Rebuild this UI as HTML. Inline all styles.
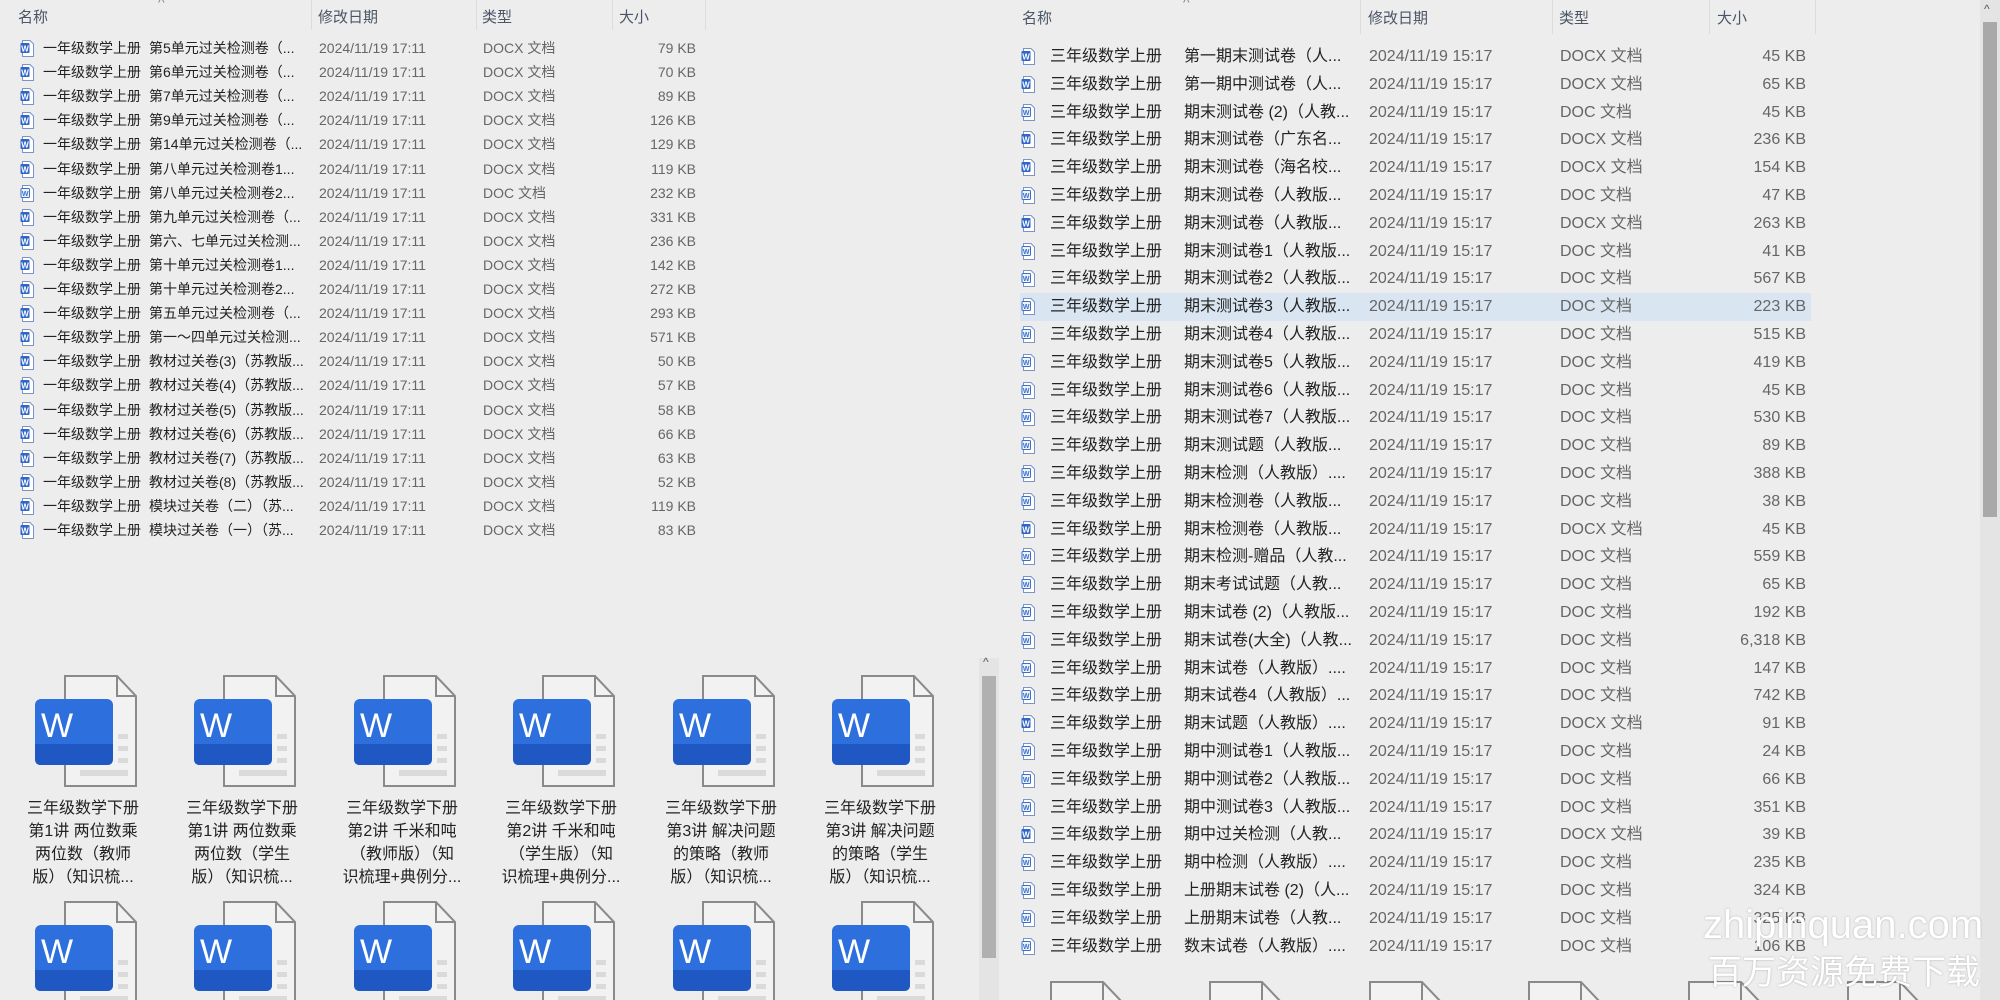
<!DOCTYPE html>
<html><head><meta charset="utf-8">
<style>
*{margin:0;padding:0;box-sizing:border-box}
html{width:2000px;height:1000px;overflow:hidden}
body{width:2000px;height:1000px;overflow:hidden;background:#ededed;position:relative;font-family:"Liberation Sans","Noto Sans CJK SC",sans-serif;color:#222}
.a{position:absolute;white-space:nowrap}
.h{position:absolute;color:#4a5565;font-size:15px}
.sep{position:absolute;width:1px;background:#dcdcdc}
.L{position:absolute;left:0;width:720px;height:24px;line-height:24px;font-size:14px}
.R{position:absolute;left:1020px;width:791px;height:28px;line-height:28px;font-size:16px}
.L span,.R span{position:absolute;white-space:nowrap}
.L svg{position:absolute;left:20px;top:4px}
.R svg{position:absolute;left:1px;top:5px}
.L .n1{left:43px}.L .n2{left:149px}.L .d{left:319px;color:#666}.L .t{left:483px;color:#666}.L .s{right:24px;color:#666;text-align:right}
.R .n1{left:30px}.R .n2{left:164px}.R .d{left:349px;color:#666}.R .t{left:540px;color:#666}.R .s{right:5px;color:#666}
.big{position:absolute;width:150px;text-align:center}
.big svg{display:block;margin:0 auto 0 0}
.cl{position:absolute;display:block}
.lab{font-size:16px;line-height:23px;color:#222;margin-top:8px;width:150px;margin-left:-24px;text-align:center;white-space:nowrap}
.wm{position:absolute;color:#fff;white-space:nowrap;line-height:1;text-shadow:0 0 2px rgba(0,0,0,.25)}
</style></head><body>
<svg width="0" height="0" style="position:absolute">
<defs>
<g id="dx"><path d="M2.5 .5H10L13.5 4V16.5H2.5Z" fill="#fff" stroke="#7a94c8"/><rect x=".5" y="3" width="9" height="10" rx="1" fill="#2f66c7"/><text x="5" y="11.3" font-size="8" fill="#fff" text-anchor="middle" font-family="Liberation Sans" font-weight="bold">W</text></g>
<g id="dc"><path d="M2.5 .5H10L13.5 4V16.5H2.5Z" fill="#fff" stroke="#7a94c8"/><rect x="1" y="3.5" width="8.5" height="9" rx="1" fill="#eef3fb" stroke="#3a6fcc"/><text x="5.2" y="11" font-size="7" fill="#3a6fcc" text-anchor="middle" font-family="Liberation Sans" font-weight="bold">W</text></g>
<g id="bg"><path d="M33 2H85L104 22V112H33Z" fill="#f2f2f2" stroke="#8a8a8a" stroke-width="2"/><path d="M85 2V22H104" fill="none" stroke="#8a8a8a" stroke-width="2"/><rect x="86" y="60" width="10" height="5" fill="#dadada"/><rect x="86" y="72" width="10" height="5" fill="#dadada"/><rect x="86" y="84" width="10" height="5" fill="#dadada"/><rect x="48" y="96" width="48" height="6" fill="#dadada"/><rect x="3" y="25" width="78" height="66" rx="6" fill="#2d6fdc"/><path d="M3 70H81V85Q81 91 75 91H9Q3 91 3 85Z" fill="#1f58c2"/><text x="25" y="63" font-size="34" fill="#fff" text-anchor="middle" font-family="Liberation Sans">W</text></g>
</defs></svg>

<!-- left header -->
<div class="h" style="left:18px;top:6px">名称</div>
<div class="a" style="left:158px;top:-6px;color:#888;font-size:14px">^</div>
<div class="sep" style="left:311px;top:0;height:30px"></div>
<div class="h" style="left:318px;top:6px">修改日期</div>
<div class="sep" style="left:476px;top:0;height:30px"></div>
<div class="h" style="left:482px;top:6px">类型</div>
<div class="sep" style="left:612px;top:0;height:30px"></div>
<div class="h" style="left:619px;top:6px">大小</div>
<div class="sep" style="left:705px;top:0;height:30px"></div>

<div class="L" style="top:36px"><svg width="15" height="17"><use href="#dx"/></svg><span class="n1">一年级数学上册</span><span class="n2">第5单元过关检测卷（...</span><span class="d">2024/11/19 17:11</span><span class="t">DOCX 文档</span><span class="s">79 KB</span></div>
<div class="L" style="top:60.1px"><svg width="15" height="17"><use href="#dx"/></svg><span class="n1">一年级数学上册</span><span class="n2">第6单元过关检测卷（...</span><span class="d">2024/11/19 17:11</span><span class="t">DOCX 文档</span><span class="s">70 KB</span></div>
<div class="L" style="top:84.2px"><svg width="15" height="17"><use href="#dx"/></svg><span class="n1">一年级数学上册</span><span class="n2">第7单元过关检测卷（...</span><span class="d">2024/11/19 17:11</span><span class="t">DOCX 文档</span><span class="s">89 KB</span></div>
<div class="L" style="top:108.3px"><svg width="15" height="17"><use href="#dx"/></svg><span class="n1">一年级数学上册</span><span class="n2">第9单元过关检测卷（...</span><span class="d">2024/11/19 17:11</span><span class="t">DOCX 文档</span><span class="s">126 KB</span></div>
<div class="L" style="top:132.4px"><svg width="15" height="17"><use href="#dx"/></svg><span class="n1">一年级数学上册</span><span class="n2">第14单元过关检测卷（...</span><span class="d">2024/11/19 17:11</span><span class="t">DOCX 文档</span><span class="s">129 KB</span></div>
<div class="L" style="top:156.5px"><svg width="15" height="17"><use href="#dx"/></svg><span class="n1">一年级数学上册</span><span class="n2">第八单元过关检测卷1...</span><span class="d">2024/11/19 17:11</span><span class="t">DOCX 文档</span><span class="s">119 KB</span></div>
<div class="L" style="top:180.6px"><svg width="15" height="17"><use href="#dc"/></svg><span class="n1">一年级数学上册</span><span class="n2">第八单元过关检测卷2...</span><span class="d">2024/11/19 17:11</span><span class="t">DOC 文档</span><span class="s">232 KB</span></div>
<div class="L" style="top:204.7px"><svg width="15" height="17"><use href="#dx"/></svg><span class="n1">一年级数学上册</span><span class="n2">第九单元过关检测卷（...</span><span class="d">2024/11/19 17:11</span><span class="t">DOCX 文档</span><span class="s">331 KB</span></div>
<div class="L" style="top:228.8px"><svg width="15" height="17"><use href="#dx"/></svg><span class="n1">一年级数学上册</span><span class="n2">第六、七单元过关检测...</span><span class="d">2024/11/19 17:11</span><span class="t">DOCX 文档</span><span class="s">236 KB</span></div>
<div class="L" style="top:252.9px"><svg width="15" height="17"><use href="#dx"/></svg><span class="n1">一年级数学上册</span><span class="n2">第十单元过关检测卷1...</span><span class="d">2024/11/19 17:11</span><span class="t">DOCX 文档</span><span class="s">142 KB</span></div>
<div class="L" style="top:277px"><svg width="15" height="17"><use href="#dx"/></svg><span class="n1">一年级数学上册</span><span class="n2">第十单元过关检测卷2...</span><span class="d">2024/11/19 17:11</span><span class="t">DOCX 文档</span><span class="s">272 KB</span></div>
<div class="L" style="top:301.1px"><svg width="15" height="17"><use href="#dx"/></svg><span class="n1">一年级数学上册</span><span class="n2">第五单元过关检测卷（...</span><span class="d">2024/11/19 17:11</span><span class="t">DOCX 文档</span><span class="s">293 KB</span></div>
<div class="L" style="top:325.2px"><svg width="15" height="17"><use href="#dx"/></svg><span class="n1">一年级数学上册</span><span class="n2">第一～四单元过关检测...</span><span class="d">2024/11/19 17:11</span><span class="t">DOCX 文档</span><span class="s">571 KB</span></div>
<div class="L" style="top:349.3px"><svg width="15" height="17"><use href="#dx"/></svg><span class="n1">一年级数学上册</span><span class="n2">教材过关卷(3)（苏教版...</span><span class="d">2024/11/19 17:11</span><span class="t">DOCX 文档</span><span class="s">50 KB</span></div>
<div class="L" style="top:373.4px"><svg width="15" height="17"><use href="#dx"/></svg><span class="n1">一年级数学上册</span><span class="n2">教材过关卷(4)（苏教版...</span><span class="d">2024/11/19 17:11</span><span class="t">DOCX 文档</span><span class="s">57 KB</span></div>
<div class="L" style="top:397.5px"><svg width="15" height="17"><use href="#dx"/></svg><span class="n1">一年级数学上册</span><span class="n2">教材过关卷(5)（苏教版...</span><span class="d">2024/11/19 17:11</span><span class="t">DOCX 文档</span><span class="s">58 KB</span></div>
<div class="L" style="top:421.6px"><svg width="15" height="17"><use href="#dx"/></svg><span class="n1">一年级数学上册</span><span class="n2">教材过关卷(6)（苏教版...</span><span class="d">2024/11/19 17:11</span><span class="t">DOCX 文档</span><span class="s">66 KB</span></div>
<div class="L" style="top:445.7px"><svg width="15" height="17"><use href="#dx"/></svg><span class="n1">一年级数学上册</span><span class="n2">教材过关卷(7)（苏教版...</span><span class="d">2024/11/19 17:11</span><span class="t">DOCX 文档</span><span class="s">63 KB</span></div>
<div class="L" style="top:469.8px"><svg width="15" height="17"><use href="#dx"/></svg><span class="n1">一年级数学上册</span><span class="n2">教材过关卷(8)（苏教版...</span><span class="d">2024/11/19 17:11</span><span class="t">DOCX 文档</span><span class="s">52 KB</span></div>
<div class="L" style="top:493.9px"><svg width="15" height="17"><use href="#dx"/></svg><span class="n1">一年级数学上册</span><span class="n2">模块过关卷（二）（苏...</span><span class="d">2024/11/19 17:11</span><span class="t">DOCX 文档</span><span class="s">119 KB</span></div>
<div class="L" style="top:518px"><svg width="15" height="17"><use href="#dx"/></svg><span class="n1">一年级数学上册</span><span class="n2">模块过关卷（一）（苏...</span><span class="d">2024/11/19 17:11</span><span class="t">DOCX 文档</span><span class="s">83 KB</span></div>

<!-- left big icons -->
<div class="big" style="left:32px;top:674px"><svg width="110" height="115"><use href="#bg"/></svg><div class="lab">三年级数学下册<br>第1讲 两位数乘<br>两位数（教师<br>版）（知识梳...</div></div>
<div class="big" style="left:191px;top:674px"><svg width="110" height="115"><use href="#bg"/></svg><div class="lab">三年级数学下册<br>第1讲 两位数乘<br>两位数（学生<br>版）（知识梳...</div></div>
<div class="big" style="left:351px;top:674px"><svg width="110" height="115"><use href="#bg"/></svg><div class="lab">三年级数学下册<br>第2讲 千米和吨<br>（教师版）（知<br>识梳理+典例分...</div></div>
<div class="big" style="left:510px;top:674px"><svg width="110" height="115"><use href="#bg"/></svg><div class="lab">三年级数学下册<br>第2讲 千米和吨<br>（学生版）（知<br>识梳理+典例分...</div></div>
<div class="big" style="left:670px;top:674px"><svg width="110" height="115"><use href="#bg"/></svg><div class="lab">三年级数学下册<br>第3讲 解决问题<br>的策略（教师<br>版）（知识梳...</div></div>
<div class="big" style="left:829px;top:674px"><svg width="110" height="115"><use href="#bg"/></svg><div class="lab">三年级数学下册<br>第3讲 解决问题<br>的策略（学生<br>版）（知识梳...</div></div>

<svg class="cl" style="left:32px;top:900px" width="110" height="100"><use href="#bg"/></svg>
<svg class="cl" style="left:191px;top:900px" width="110" height="100"><use href="#bg"/></svg>
<svg class="cl" style="left:351px;top:900px" width="110" height="100"><use href="#bg"/></svg>
<svg class="cl" style="left:510px;top:900px" width="110" height="100"><use href="#bg"/></svg>
<svg class="cl" style="left:670px;top:900px" width="110" height="100"><use href="#bg"/></svg>
<svg class="cl" style="left:829px;top:900px" width="110" height="100"><use href="#bg"/></svg>

<!-- left scrollbar -->
<div class="a" style="left:979px;top:658px;width:20px;height:342px;background:#e4e4e4"></div>
<div class="a" style="left:982px;top:676px;width:14px;height:282px;background:#b0b0b0"></div>
<div class="a" style="left:983px;top:655px;font-size:12px;color:#555">^</div>

<!-- right header -->
<div class="h" style="left:1022px;top:7px">名称</div>
<div class="a" style="left:1183px;top:-6px;color:#888;font-size:14px">^</div>
<div class="sep" style="left:1360px;top:0;height:34px"></div>
<div class="h" style="left:1368px;top:7px">修改日期</div>
<div class="sep" style="left:1552px;top:0;height:34px"></div>
<div class="h" style="left:1559px;top:7px">类型</div>
<div class="sep" style="left:1709px;top:0;height:34px"></div>
<div class="h" style="left:1717px;top:7px">大小</div>
<div class="sep" style="left:1815px;top:0;height:34px"></div>

<div class="R" style="top:43px"><svg width="15" height="17"><use href="#dx"/></svg><span class="n1">三年级数学上册</span><span class="n2">第一期末测试卷（人...</span><span class="d">2024/11/19 15:17</span><span class="t">DOCX 文档</span><span class="s">45 KB</span></div>
<div class="R" style="top:70.8px"><svg width="15" height="17"><use href="#dx"/></svg><span class="n1">三年级数学上册</span><span class="n2">第一期中测试卷（人...</span><span class="d">2024/11/19 15:17</span><span class="t">DOCX 文档</span><span class="s">65 KB</span></div>
<div class="R" style="top:98.6px"><svg width="15" height="17"><use href="#dc"/></svg><span class="n1">三年级数学上册</span><span class="n2">期末测试卷 (2)（人教...</span><span class="d">2024/11/19 15:17</span><span class="t">DOC 文档</span><span class="s">45 KB</span></div>
<div class="R" style="top:126.4px"><svg width="15" height="17"><use href="#dx"/></svg><span class="n1">三年级数学上册</span><span class="n2">期末测试卷（广东名...</span><span class="d">2024/11/19 15:17</span><span class="t">DOCX 文档</span><span class="s">236 KB</span></div>
<div class="R" style="top:154.2px"><svg width="15" height="17"><use href="#dx"/></svg><span class="n1">三年级数学上册</span><span class="n2">期末测试卷（海名校...</span><span class="d">2024/11/19 15:17</span><span class="t">DOCX 文档</span><span class="s">154 KB</span></div>
<div class="R" style="top:182px"><svg width="15" height="17"><use href="#dc"/></svg><span class="n1">三年级数学上册</span><span class="n2">期末测试卷（人教版...</span><span class="d">2024/11/19 15:17</span><span class="t">DOC 文档</span><span class="s">47 KB</span></div>
<div class="R" style="top:209.8px"><svg width="15" height="17"><use href="#dx"/></svg><span class="n1">三年级数学上册</span><span class="n2">期末测试卷（人教版...</span><span class="d">2024/11/19 15:17</span><span class="t">DOCX 文档</span><span class="s">263 KB</span></div>
<div class="R" style="top:237.6px"><svg width="15" height="17"><use href="#dc"/></svg><span class="n1">三年级数学上册</span><span class="n2">期末测试卷1（人教版...</span><span class="d">2024/11/19 15:17</span><span class="t">DOC 文档</span><span class="s">41 KB</span></div>
<div class="R" style="top:265.4px"><svg width="15" height="17"><use href="#dc"/></svg><span class="n1">三年级数学上册</span><span class="n2">期末测试卷2（人教版...</span><span class="d">2024/11/19 15:17</span><span class="t">DOC 文档</span><span class="s">567 KB</span></div>
<div class="R" style="top:293.2px;background:#d9e5f1"><svg width="15" height="17"><use href="#dc"/></svg><span class="n1">三年级数学上册</span><span class="n2">期末测试卷3（人教版...</span><span class="d">2024/11/19 15:17</span><span class="t">DOC 文档</span><span class="s">223 KB</span></div>
<div class="R" style="top:321px"><svg width="15" height="17"><use href="#dc"/></svg><span class="n1">三年级数学上册</span><span class="n2">期末测试卷4（人教版...</span><span class="d">2024/11/19 15:17</span><span class="t">DOC 文档</span><span class="s">515 KB</span></div>
<div class="R" style="top:348.8px"><svg width="15" height="17"><use href="#dc"/></svg><span class="n1">三年级数学上册</span><span class="n2">期末测试卷5（人教版...</span><span class="d">2024/11/19 15:17</span><span class="t">DOC 文档</span><span class="s">419 KB</span></div>
<div class="R" style="top:376.6px"><svg width="15" height="17"><use href="#dc"/></svg><span class="n1">三年级数学上册</span><span class="n2">期末测试卷6（人教版...</span><span class="d">2024/11/19 15:17</span><span class="t">DOC 文档</span><span class="s">45 KB</span></div>
<div class="R" style="top:404.4px"><svg width="15" height="17"><use href="#dc"/></svg><span class="n1">三年级数学上册</span><span class="n2">期末测试卷7（人教版...</span><span class="d">2024/11/19 15:17</span><span class="t">DOC 文档</span><span class="s">530 KB</span></div>
<div class="R" style="top:432.2px"><svg width="15" height="17"><use href="#dc"/></svg><span class="n1">三年级数学上册</span><span class="n2">期末测试题（人教版...</span><span class="d">2024/11/19 15:17</span><span class="t">DOC 文档</span><span class="s">89 KB</span></div>
<div class="R" style="top:460px"><svg width="15" height="17"><use href="#dc"/></svg><span class="n1">三年级数学上册</span><span class="n2">期末检测（人教版）....</span><span class="d">2024/11/19 15:17</span><span class="t">DOC 文档</span><span class="s">388 KB</span></div>
<div class="R" style="top:487.8px"><svg width="15" height="17"><use href="#dc"/></svg><span class="n1">三年级数学上册</span><span class="n2">期末检测卷（人教版...</span><span class="d">2024/11/19 15:17</span><span class="t">DOC 文档</span><span class="s">38 KB</span></div>
<div class="R" style="top:515.6px"><svg width="15" height="17"><use href="#dx"/></svg><span class="n1">三年级数学上册</span><span class="n2">期末检测卷（人教版...</span><span class="d">2024/11/19 15:17</span><span class="t">DOCX 文档</span><span class="s">45 KB</span></div>
<div class="R" style="top:543.4px"><svg width="15" height="17"><use href="#dc"/></svg><span class="n1">三年级数学上册</span><span class="n2">期末检测-赠品（人教...</span><span class="d">2024/11/19 15:17</span><span class="t">DOC 文档</span><span class="s">559 KB</span></div>
<div class="R" style="top:571.2px"><svg width="15" height="17"><use href="#dc"/></svg><span class="n1">三年级数学上册</span><span class="n2">期末考试试题（人教...</span><span class="d">2024/11/19 15:17</span><span class="t">DOC 文档</span><span class="s">65 KB</span></div>
<div class="R" style="top:599px"><svg width="15" height="17"><use href="#dc"/></svg><span class="n1">三年级数学上册</span><span class="n2">期末试卷 (2)（人教版...</span><span class="d">2024/11/19 15:17</span><span class="t">DOC 文档</span><span class="s">192 KB</span></div>
<div class="R" style="top:626.8px"><svg width="15" height="17"><use href="#dc"/></svg><span class="n1">三年级数学上册</span><span class="n2">期末试卷(大全)（人教...</span><span class="d">2024/11/19 15:17</span><span class="t">DOC 文档</span><span class="s">6,318 KB</span></div>
<div class="R" style="top:654.6px"><svg width="15" height="17"><use href="#dc"/></svg><span class="n1">三年级数学上册</span><span class="n2">期末试卷（人教版）....</span><span class="d">2024/11/19 15:17</span><span class="t">DOC 文档</span><span class="s">147 KB</span></div>
<div class="R" style="top:682.4px"><svg width="15" height="17"><use href="#dc"/></svg><span class="n1">三年级数学上册</span><span class="n2">期末试卷4（人教版）...</span><span class="d">2024/11/19 15:17</span><span class="t">DOC 文档</span><span class="s">742 KB</span></div>
<div class="R" style="top:710.2px"><svg width="15" height="17"><use href="#dx"/></svg><span class="n1">三年级数学上册</span><span class="n2">期末试题（人教版）....</span><span class="d">2024/11/19 15:17</span><span class="t">DOCX 文档</span><span class="s">91 KB</span></div>
<div class="R" style="top:738px"><svg width="15" height="17"><use href="#dc"/></svg><span class="n1">三年级数学上册</span><span class="n2">期中测试卷1（人教版...</span><span class="d">2024/11/19 15:17</span><span class="t">DOC 文档</span><span class="s">24 KB</span></div>
<div class="R" style="top:765.8px"><svg width="15" height="17"><use href="#dc"/></svg><span class="n1">三年级数学上册</span><span class="n2">期中测试卷2（人教版...</span><span class="d">2024/11/19 15:17</span><span class="t">DOC 文档</span><span class="s">66 KB</span></div>
<div class="R" style="top:793.6px"><svg width="15" height="17"><use href="#dc"/></svg><span class="n1">三年级数学上册</span><span class="n2">期中测试卷3（人教版...</span><span class="d">2024/11/19 15:17</span><span class="t">DOC 文档</span><span class="s">351 KB</span></div>
<div class="R" style="top:821.4px"><svg width="15" height="17"><use href="#dx"/></svg><span class="n1">三年级数学上册</span><span class="n2">期中过关检测（人教...</span><span class="d">2024/11/19 15:17</span><span class="t">DOCX 文档</span><span class="s">39 KB</span></div>
<div class="R" style="top:849.2px"><svg width="15" height="17"><use href="#dc"/></svg><span class="n1">三年级数学上册</span><span class="n2">期中检测（人教版）....</span><span class="d">2024/11/19 15:17</span><span class="t">DOC 文档</span><span class="s">235 KB</span></div>
<div class="R" style="top:877px"><svg width="15" height="17"><use href="#dc"/></svg><span class="n1">三年级数学上册</span><span class="n2">上册期末试卷 (2)（人...</span><span class="d">2024/11/19 15:17</span><span class="t">DOC 文档</span><span class="s">324 KB</span></div>
<div class="R" style="top:904.8px"><svg width="15" height="17"><use href="#dc"/></svg><span class="n1">三年级数学上册</span><span class="n2">上册期末试卷（人教...</span><span class="d">2024/11/19 15:17</span><span class="t">DOC 文档</span><span class="s">325 KB</span></div>
<div class="R" style="top:932.6px"><svg width="15" height="17"><use href="#dc"/></svg><span class="n1">三年级数学上册</span><span class="n2">数末试卷（人教版）....</span><span class="d">2024/11/19 15:17</span><span class="t">DOC 文档</span><span class="s">106 KB</span></div>

<!-- right bottom icons partially visible -->
<svg class="cl" style="left:1018px;top:980px" width="110" height="20"><use href="#bg"/></svg>
<svg class="cl" style="left:1177px;top:980px" width="110" height="20"><use href="#bg"/></svg>
<svg class="cl" style="left:1337px;top:980px" width="110" height="20"><use href="#bg"/></svg>
<svg class="cl" style="left:1496px;top:980px" width="110" height="20"><use href="#bg"/></svg>
<svg class="cl" style="left:1656px;top:980px" width="110" height="20"><use href="#bg"/></svg>
<svg class="cl" style="left:1815px;top:980px" width="110" height="20"><use href="#bg"/></svg>

<!-- right scrollbar -->
<div class="a" style="left:1980px;top:0;width:20px;height:1000px;background:#e4e4e4"></div>
<div class="a" style="left:1983px;top:22px;width:14px;height:495px;background:#a9a9a9"></div>
<div class="a" style="left:1984px;top:2px;font-size:12px;color:#555">^</div>

<!-- watermark -->
<div class="wm" style="left:1703px;top:905px;font-size:40px;font-family:'Liberation Sans',sans-serif">zhipinquan.com</div>
<div class="wm" style="left:1708px;top:956px;font-size:34px">百万资源免费下载</div>
</body></html>
